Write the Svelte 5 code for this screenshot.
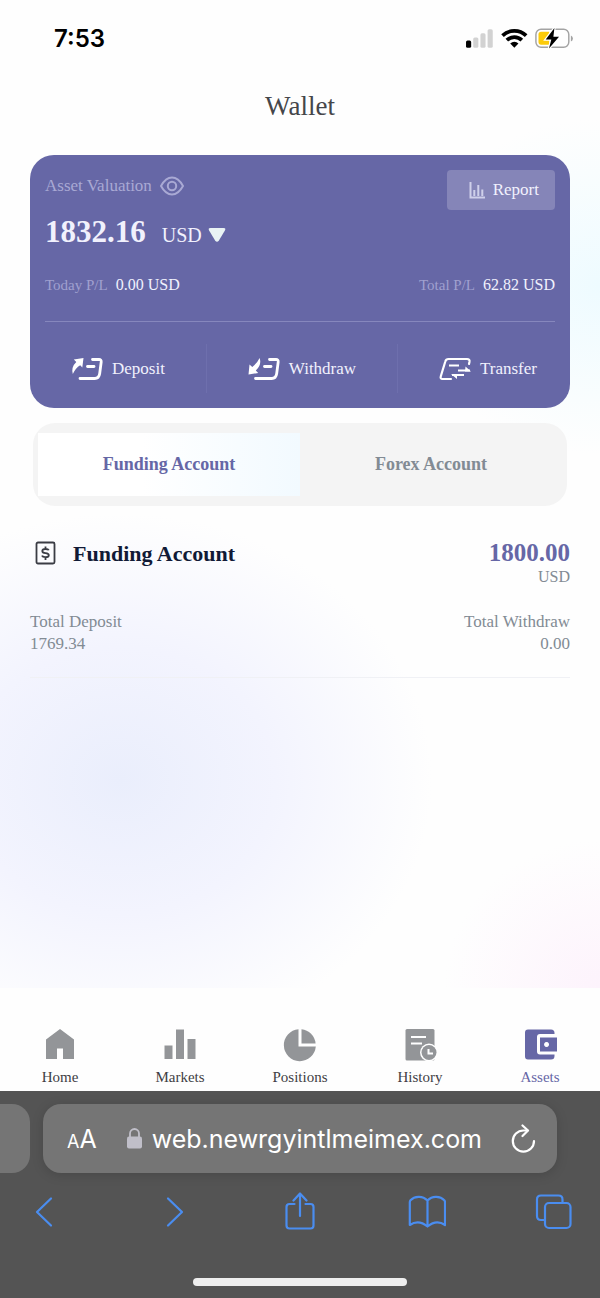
<script lang="ts">
	type Account = {
		name: string;
		balance: string;
		deposit: string;
		withdraw: string;
	};

	const accounts: Account[] = [
		{ name: 'Funding Account', balance: '1800.00', deposit: '1769.34', withdraw: '0.00' },
		{ name: 'Forex Account', balance: '32.16', deposit: '0.00', withdraw: '0.00' }
	];
	const navItems = ['Home', 'Markets', 'Positions', 'History', 'Assets'];

	let selected = $state(0);
	let hidden = $state(false);
	let currency = $state('USD');
	let url = $state('web.newrgyintlmeimex.com');

	let account = $derived(accounts[selected]);

	function mask(value: string) {
		return hidden ? '******' : value;
	}
</script>

<div class="screen">
	<div class="page">
		<div class="status">
			<span class="time">7:53</span>
			<svg width="111" height="23" viewBox="0 0 108 22" aria-hidden="true">
				<rect x="1" y="13" width="5" height="7" rx="1.5" fill="#000" />
				<rect x="8" y="10" width="5" height="10" rx="1.5" fill="#d2d2d2" />
				<rect x="15" y="6" width="5" height="14" rx="1.5" fill="#d2d2d2" />
				<rect x="22" y="2" width="5" height="18" rx="1.5" fill="#d2d2d2" />
				<g fill="none" stroke="#000" stroke-width="3.6">
					<path d="M36.5 8.2a16.5 16.5 0 0 1 23 0" />
					<path d="M40.7 12.6a10.4 10.4 0 0 1 14.6 0" />
				</g>
				<path d="M44 15.8a6 6 0 0 1 8 0L48 20z" fill="#000" />
				<rect x="69" y="2" width="32" height="17.500" rx="5" fill="none" stroke="#a3a3a3" stroke-width="1.4" />
				<path d="M103 8v6q2-.8 2-3t-2-3z" fill="#a3a3a3" />
				<path d="M74 4.500h8v12.500h-8a2.500 2.500 0 0 1-2.500-2.500v-7.500a2.500 2.500 0 0 1 2.500-2.500z" fill="#fccb0a" />
				<path d="M87 .8 78.500 12h5.500l-2.300 8.700L91.500 9.200H86z" fill="#000" stroke="#fff" stroke-width="2.400" paint-order="stroke" />
			</svg>
		</div>

		<h1>Wallet</h1>

		<section class="card">
			<div class="card-top">
				<div>
					<div class="valuation">
						<span>Asset Valuation</span>
						<button class="eye" aria-label="Toggle balance" onclick={() => (hidden = !hidden)}>
							<svg width="24" height="20" viewBox="0 0 24 20" fill="none" stroke="currentColor" stroke-width="2">
								<path d="M1 10C4 4.500 7.500 1.500 12 1.500S20 4.500 23 10c-3 5.500-6.500 8.500-11 8.500S4 15.500 1 10z" />
								<circle cx="12" cy="10" r="4.200" />
							</svg>
						</button>
					</div>
					<div class="total">
						<strong>{mask('1832.16')}</strong>
						<label class="currency">
							<select bind:value={currency} aria-label="Currency">
								<option>USD</option>
								<option>EUR</option>
							</select>
							<svg width="18" height="16" viewBox="0 0 18 16">
								<path d="M2.500 1h13q2.800 0 1.400 2.400l-6 10.200q-1.900 2.400-3.800 0l-6-10.200Q-.3 1 2.500 1z" fill="#e9f3f4" />
							</svg>
						</label>
					</div>
				</div>
				<button class="report">
					<svg width="16" height="17" viewBox="0 0 16 17" fill="none" stroke="#cfd0ea" stroke-width="2">
						<path d="M1.500 0v15.500H16" />
						<path d="M5.300 14V8M9.300 14V3M13.300 14V7.500" />
					</svg>
					Report
				</button>
			</div>

			<div class="profit">
				<div><span>Today P/L</span> {mask('0.00')} {currency}</div>
				<div><span>Total P/L</span> {mask('62.82')} {currency}</div>
			</div>

			<div class="actions">
				<button>
					<svg width="32" height="24" viewBox="0 0 32 24" fill="none" stroke="#fff" stroke-width="2.800">
						<path d="M21.500 2.500H28q2.500 0 2.200 2.500l-1.500 11.500q-.7 5-5 5H9" stroke-linecap="round" />
						<path d="M16.500 9.500h6.500" stroke-linecap="round" />
						<path d="M12.500 1 11.300 10.500 9.200 8.200Q4.500 11 1.800 17 0 10 5.300 5L2.800 2.600z" fill="#fff" stroke="none" />
					</svg>
					Deposit
				</button>
				<i></i>
				<button>
					<svg width="32" height="24" viewBox="0 0 32 24" fill="none" stroke="#fff" stroke-width="2.800">
						<path d="M21.500 2.500H28q2.500 0 2.200 2.500l-1.500 11.500q-.7 5-5 5H7.500" stroke-linecap="round" />
						<path d="M16.500 9.500h6.500" stroke-linecap="round" />
						<path d="M.5 17.500 1.500 7.500 4.300 10Q9 6.500 11.600 1 14 8 7.800 13.500L10.200 16z" fill="#fff" stroke="none" />
					</svg>
					Withdraw
				</button>
				<i></i>
				<button>
					<svg width="32" height="24" viewBox="0 0 32 24" fill="none" stroke="#fff" stroke-width="2.200">
						<path d="M12 22H3.500q-2.500 0-1.700-2.800L6.300 4.500Q7 2 9.500 2h18.500q3 0 2.500 2.800L30 7" stroke-linecap="round" />
						<path d="M10 8.500h10M19 13.500h12M25 18H13" />
						<path d="M26.500 9.500 32 14.500h-6zM12 17h6v5z" fill="#fff" stroke="none" />
					</svg>
					Transfer
				</button>
			</div>
		</section>

		<div class="tabs" role="tablist">
			{#each accounts as item, i}
				<button role="tab" aria-selected={selected === i} class:active={selected === i} onclick={() => (selected = i)}>
					{item.name}
				</button>
			{/each}
		</div>

		<section class="account">
			<div class="account-head">
				<svg width="22" height="24" viewBox="0 0 22 24" fill="none" stroke="#3a3c44" stroke-width="1.800">
					<rect x="1.500" y="1.500" width="18" height="21" rx="1.500" />
					<path d="M13.800 9.300Q13.300 8 10.500 8 7.300 8 7.300 10t3.200 2.100q3.300.2 3.300 2.100 0 2-3.300 2-2.900 0-3.400-1.600M10.500 5.500V8M10.500 16V19" />
				</svg>
				<h2>{account.name}</h2>
				<div class="balance">
					<strong>{mask(account.balance)}</strong>
					<span>{currency}</span>
				</div>
			</div>
			<dl>
				<div>
					<dt>Total Deposit</dt>
					<dd>{mask(account.deposit)}</dd>
				</div>
				<div>
					<dt>Total Withdraw</dt>
					<dd>{mask(account.withdraw)}</dd>
				</div>
			</dl>
		</section>
	</div>

	<nav class="menu">
		{#each navItems as item}
			<a href="#{item.toLowerCase()}" class:current={item === 'Assets'}>
				<svg width="34" height="34" viewBox="0 0 34 34" fill="currentColor">
					{#if item === 'Home'}
						<path d="M17 1 31 11.500V31H20V20.500h-6V31H3V11.500z" />
					{:else if item === 'Markets'}
						<path d="M1.500 17.500h8V31h-8zM13 1.500h8V31h-8zM24.500 11h8v20h-8z" />
					{:else if item === 'Positions'}
						<path d="M15.500 1.200V18.500H32.800A16 16 0 1 1 15.500 1.200z" />
						<path d="M18.500 1.200A16 16 0 0 1 32.600 15.500H18.500z" />
					{:else if item === 'History'}
						<path d="M4 1h26q1.500 0 1.500 1.500V31q0 1.500-1.500 1.500H4Q2.500 32.500 2.500 31V2.500Q2.500 1 4 1z" />
						<path d="M8 9h15M8 15.500h11" stroke="#fff" stroke-width="2" />
						<circle cx="26" cy="24.500" r="9" fill="#fff" />
						<circle cx="26" cy="24.500" r="7.500" />
						<path d="M25.500 21v4.500H30" fill="none" stroke="#fff" stroke-width="2" />
					{:else}
						<path d="M5 1.500h23q3.500 0 3.500 3.500v1H17q-3 0-3 3v14.500q0 3 3 3h14.500v1.500q0 3.500-3.500 3.500H5Q2 31.500 2 28.500V4.500q0-3 3-3z" />
						<path d="M17 9.500h17v14H17zM23.500 14a2.500 2.500 0 1 0 .1 0z" fill-rule="evenodd" />
					{/if}
				</svg>
				{item}
			</a>
		{/each}
	</nav>

	<footer>
		<div class="address-row">
			<div class="peek"></div>
			<div class="address">
				<button class="text-size" aria-label="Text size"><small>A</small>A</button>
				<svg width="15" height="21" viewBox="0 0 15 21">
					<rect x="0" y="8.500" width="15" height="12" rx="2" fill="#c0bfc9" />
					<path d="M3 9V5.500a4.500 4.500 0 0 1 9 0V9" fill="none" stroke="#c0bfc9" stroke-width="1.800" />
				</svg>
				<input type="text" bind:value={url} aria-label="Address" />
				<button aria-label="Reload">
					<svg width="26" height="30" viewBox="0 0 26 30" fill="none" stroke="#fff" stroke-width="2.200" stroke-linecap="round" stroke-linejoin="round">
						<path d="M17.500 6.500H13.500A10.600 10.600 0 1 0 24 17" />
						<path d="M12.500 1.500 18 6.500 12.500 12" />
					</svg>
				</button>
			</div>
			<div class="peek-gap"></div>
		</div>
		<div class="tools">
			<button aria-label="Back">
				<svg width="38" height="38" viewBox="0 0 38 38"><path d="M26 6.500 12 20 26 33.500" /></svg>
			</button>
			<button aria-label="Forward">
				<svg width="38" height="38" viewBox="0 0 38 38"><path d="M15 6.500 29 20 15 33.500" /></svg>
			</button>
			<button aria-label="Share">
				<svg width="38" height="38" viewBox="0 0 38 38">
					<path d="M14.500 12H9.500q-3 0-3 3v18.500q0 3 3 3h21q3 0 3-3V15q0-3-3-3h-5M20 24V2M13.500 8.500 20 1.500l6.500 7" />
				</svg>
			</button>
			<button aria-label="Bookmarks">
				<svg width="38" height="38" viewBox="0 0 38 38">
					<path d="M19.500 8.500Q15.500 4.500 10.500 4.800q-5 .2-8 3.400-.7.800-.7 2V33Q10.500 27 19.500 34.500 28.500 27 37 33V10.200q0-1.200-.7-2-3-3.200-8-3.400-5-.3-8.800 3.700zV34" />
				</svg>
			</button>
			<button aria-label="Tabs">
				<svg width="38" height="38" viewBox="0 0 38 38">
					<rect x="10" y="11" width="25.500" height="25" rx="4" />
					<path d="M9.500 28H6q-4 0-4-4V7.500q0-4 4-4h17.500q4 0 4 4v3" />
				</svg>
			</button>
		</div>
		<div class="home-bar"></div>
	</footer>
</div>

<style>
	:global(body) {
		margin: 0;
		background: #fff;
	}

	.screen {
		display: flex;
		flex-direction: column;
		min-height: 100vh;
		font-family: 'Liberation Serif', 'Times New Roman', serif;
		color: #45464a;
	}

	.page {
		flex: 1;
		padding: 0 30px;
		background:
			radial-gradient(ellipse 32% 17% at 100% 29%, #eefbff, rgba(255, 255, 255, 0)),
			radial-gradient(ellipse 52% 27% at 20% 79%, #eaeefc, #f3f4fe 50%, rgba(255, 255, 255, 0)),
			radial-gradient(ellipse 26% 15% at 100% 100%, #fdf3fc, rgba(255, 255, 255, 0)),
			#fefefe;
	}

	button {
		padding: 0;
		border: 0;
		background: none;
		color: inherit;
		font: inherit;
		cursor: pointer;
	}

	svg {
		display: block;
		flex: none;
	}

	.status {
		display: flex;
		justify-content: space-between;
		align-items: center;
		height: 76px;
		margin: 0 -6px 0 24px;
		color: #000;
	}

	.time {
		font: 600 24px Inter, sans-serif;
	}

	h1 {
		margin: 0 0 19px;
		font-size: 27px;
		font-weight: 400;
		line-height: 60px;
		text-align: center;
	}

	.card {
		padding: 15px;
		border-radius: 24px;
		background: #6667a6;
		color: #f1f1fd;
	}

	.card-top {
		display: flex;
		justify-content: space-between;
		align-items: flex-start;
	}

	.valuation {
		display: flex;
		align-items: center;
		gap: 8px;
		height: 32px;
		font-size: 17px;
		color: #a9a9d4;
	}

	.total {
		display: flex;
		align-items: baseline;
		gap: 16px;
		margin-top: 12px;
	}

	.total strong {
		font-size: 31px;
		line-height: 36px;
	}

	.currency {
		display: flex;
		align-items: center;
		gap: 5px;
	}

	select {
		appearance: none;
		padding: 0;
		border: 0;
		background: none;
		color: inherit;
		font: 20px 'Liberation Serif', 'Times New Roman', serif;
	}

	.report {
		display: flex;
		align-items: center;
		gap: 8px;
		height: 40px;
		padding: 0 16px 0 22px;
		border-radius: 4px;
		background: #8585b8;
		font-size: 17px;
	}

	.profit {
		display: flex;
		justify-content: space-between;
		padding: 25px 0 26px;
		border-bottom: 1px solid #8687bd;
		font-size: 16px;
		line-height: 20px;
	}

	.profit span {
		margin-right: 4px;
		font-size: 15px;
		color: #a0a0cf;
	}

	.actions {
		display: flex;
		justify-content: space-between;
		align-items: center;
		padding: 22px 18px 0 26px;
	}

	.actions button {
		display: flex;
		align-items: center;
		gap: 9px;
		font-size: 17px;
	}

	.actions i {
		width: 1px;
		height: 49px;
		background: #6e6fad;
	}

	.tabs {
		display: flex;
		margin: 15px 3px 0;
		padding: 10px 5px;
		border-radius: 22px;
		background: #f4f4f4;
	}

	.tabs button {
		flex: 1;
		height: 63px;
		color: #828b94;
		font-size: 18px;
		font-weight: 700;
	}

	.tabs .active {
		background: linear-gradient(90deg, #fff 40%, #f2faff);
		color: #6667a6;
	}

	.account {
		margin-top: 34px;
		padding-bottom: 22px;
		border-bottom: 1px solid #f0f1f5;
		color: #828b94;
	}

	.account-head {
		display: flex;
		align-items: flex-start;
		padding-left: 5px;
	}

	.account-head svg {
		margin-top: 1px;
	}

	h2 {
		flex: 1;
		margin: 0 0 0 16px;
		color: #111a36;
		font-size: 22px;
		line-height: 28px;
	}

	.balance {
		display: flex;
		flex-direction: column;
		text-align: right;
		font-size: 16px;
		line-height: 22px;
	}

	.balance strong {
		color: #6667a6;
		font-size: 25px;
		line-height: 26px;
	}

	dl {
		display: flex;
		justify-content: space-between;
		margin: 23px 0 0;
		font-size: 17px;
		line-height: 22px;
	}

	dl div:last-child {
		text-align: right;
	}

	dd {
		margin: 0;
	}

	.menu {
		display: grid;
		grid-template-columns: repeat(5, 1fr);
		height: 103px;
		box-sizing: border-box;
		padding-top: 40px;
		background: #fefefe;
	}

	.menu a {
		display: flex;
		flex-direction: column;
		align-items: center;
		gap: 6px;
		color: #3f4044;
		font-size: 15px;
		line-height: 18px;
		text-decoration: none;
	}

	.menu svg {
		color: #939598;
	}

	.menu .current,
	.menu .current svg {
		color: #6667a6;
	}

	footer {
		padding: 13px 0 12px;
		background: #545454;
		color: #fff;
	}

	.address-row {
		display: flex;
		gap: 13px;
	}

	.peek {
		width: 30px;
		border-radius: 0 18px 18px 0;
		background: #757575;
	}

	.peek-gap {
		width: 30px;
	}

	.address {
		display: flex;
		flex: 1;
		align-items: center;
		min-width: 0;
		height: 69px;
		box-sizing: border-box;
		padding: 0 21px 0 24px;
		border-radius: 18px;
		background: #757575;
		box-shadow: 0 2px 12px rgba(0, 0, 0, 0.15);
		font-family: Inter, 'Liberation Sans', sans-serif;
	}

	.text-size {
		margin-right: 30px;
		font-size: 25px;
	}

	.text-size small {
		font-size: 18px;
	}

	input {
		flex: 1;
		min-width: 0;
		margin: 0 10px;
		padding: 0;
		border: 0;
		outline: 0;
		background: none;
		color: inherit;
		font: 25px Inter, 'Liberation Sans', sans-serif;
	}

	.tools {
		display: flex;
		justify-content: space-between;
		padding: 19px 27px 0 25px;
	}

	.tools svg {
		fill: none;
		stroke: #4a8df0;
		stroke-width: 2.2;
		stroke-linecap: round;
		stroke-linejoin: round;
	}

	.home-bar {
		width: 214px;
		height: 8px;
		margin: 48px auto 0;
		border-radius: 4px;
		background: #eee;
	}
</style>
